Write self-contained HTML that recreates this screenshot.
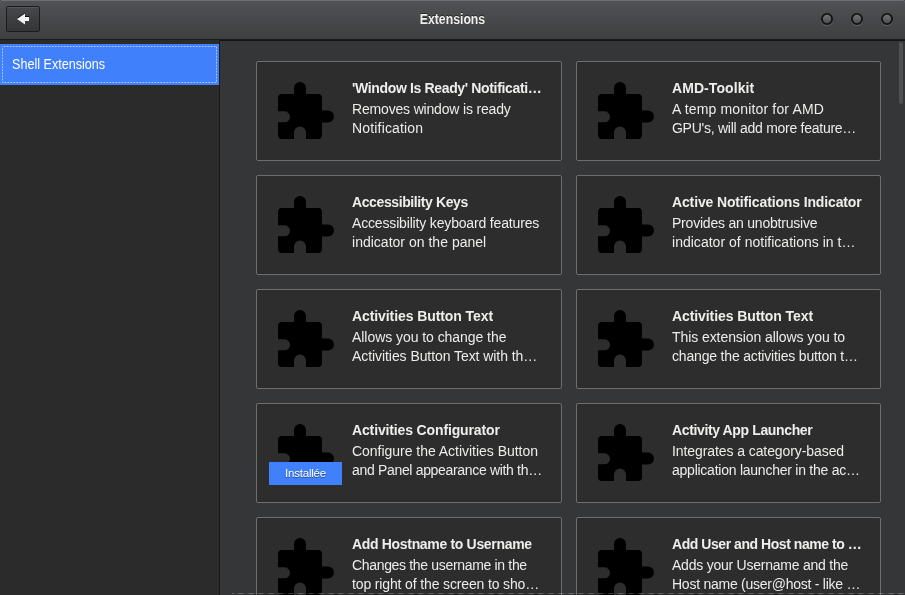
<!DOCTYPE html>
<html lang="en"><head><meta charset="utf-8"><title>Extensions</title>
<style>
html,body{margin:0;padding:0;}
body{width:905px;height:595px;overflow:hidden;position:relative;background:#353638;font-family:"Liberation Sans",sans-serif;font-size:14px;color:#eeeeec;}
#wrap{position:absolute;left:0;top:0;width:905px;height:595px;will-change:transform;}
#hdr{position:absolute;left:0;top:0;width:905px;height:39px;background:linear-gradient(#515255,#3e3f41);border-bottom:1px solid #1b1b1c;box-shadow:inset 0 1px 0 #6e6f71;border-radius:2px 2px 0 0;}
#hdrbg{position:absolute;left:0;top:0;width:905px;height:8px;background:#2a2a2a;}
#shadow{position:absolute;left:219px;top:40px;width:686px;height:1px;background:#131416;}
#title{position:absolute;left:0;width:905px;top:11px;text-align:center;font-weight:bold;font-size:14px;line-height:16px;color:#eeeeec;transform:scaleX(.875);text-shadow:0 -1px rgba(0,0,0,.5);}
#back{position:absolute;left:6px;top:6px;width:32px;height:24px;border:1px solid #1c1c1d;border-radius:2px;background:linear-gradient(#47484b,#343537);box-shadow:inset 0 1px 0 rgba(255,255,255,.09);}
#back svg{position:absolute;left:10px;top:5px;}
#wcs{position:absolute;left:815px;top:10px;}
#side{position:absolute;left:0;top:40px;width:219px;height:555px;background:#2b2b2b;border-right:1px solid #191919;}
#row{position:absolute;left:0;top:4px;width:219px;height:41px;background:#4080fb;}
#row .f{position:absolute;left:0;top:0;}
#row span{position:absolute;left:12px;top:12px;line-height:16px;font-size:14px;color:#fff;display:inline-block;white-space:nowrap;transform-origin:0 0;transform:scaleX(.9);}
.card{position:absolute;height:100px;box-sizing:border-box;border:1px solid #6e6e6e;border-radius:2px;background:#2d2d2d;}
.pz{position:absolute;left:21px;top:20px;}
.t{position:absolute;left:95px;top:18px;font-weight:bold;font-size:14px;line-height:16px;white-space:nowrap;color:#eeeeec;}
.d{position:absolute;left:95px;font-size:14px;line-height:16px;white-space:nowrap;color:#ececea;}
.d1{top:39px;}
.d2{top:58px;}
.badge{position:absolute;left:12px;top:58px;width:73px;height:23px;background:#4080fb;text-align:center;}
.badge span{font-size:11.5px;line-height:23px;display:block;color:#fff;text-shadow:0 1px rgba(0,0,0,.4);letter-spacing:-0.23px;}
#sb{position:absolute;left:899px;top:42px;width:4px;height:62px;border-radius:2px;background:#4f5053;}
#dash{position:absolute;left:232px;top:593px;}
</style></head><body>
<div id="wrap"><div id="hdrbg"></div>
<div id="hdr"></div>
<div id="title">Extensions</div>
<div id="back"><svg width="13" height="14" viewBox="0 0 13 14"><path d="M0,7 L8,1.5 L8,5 L12,5 L12,9 L8,9 L8,12.5 Z" fill="rgba(0,0,0,.75)" transform="translate(0,-1)"/><path d="M0,7 L8,1.5 L8,5 L12,5 L12,9 L8,9 L8,12.5 Z" fill="#f3f3f3"/></svg></div>
<svg id="wcs" width="90" height="20" viewBox="0 0 90 20"><defs><linearGradient id="wg" x1="0" y1="0" x2="0" y2="1"><stop offset="0" stop-color="#77787a"/><stop offset="1" stop-color="#48494b"/></linearGradient></defs>
<g fill="none" stroke="rgba(255,255,255,.13)" stroke-width="1.6"><circle cx="12" cy="10.2" r="5.2"/><circle cx="42" cy="10.2" r="5.2"/><circle cx="72" cy="10.2" r="5.2"/></g>
<g fill="url(#wg)" stroke="#141415" stroke-width="1.9"><circle cx="12" cy="9" r="5.1"/><circle cx="42" cy="9" r="5.1"/><circle cx="72" cy="9" r="5.1"/></g></svg>
<div id="side"><div id="row"><svg class="f" width="219" height="41" viewBox="0 0 219 41"><rect x="2.5" y="2.5" width="214" height="36" fill="none" stroke="rgba(255,255,255,.6)" stroke-width="1" stroke-dasharray="1.7 1.3" stroke-dashoffset="-1.3"/></svg><span>Shell Extensions</span></div></div>
<div id="shadow"></div>
<div class="card" style="left:256px;top:61px;width:306px"><svg class="pz" width="56" height="57" viewBox="0 0 56 57"><path d="M4,12 H16 V6 a6,6 0 0 1 12,0 V12 H40 a4,4 0 0 1 4,4 V28.5 H50 a6,6 0 0 1 0,12 H44 V53 a4,4 0 0 1 -4,4 H28 V50.5 a6,6 0 0 0 -12,0 V57 H4 a4,4 0 0 1 -4,-4 V40.3 H6.5 a5.5,5.5 0 0 0 0,-11 H0 V16 a4,4 0 0 1 4,-4 Z" fill="#000"/></svg><div class="t" id="t0" style="letter-spacing:-0.346px">'Window Is Ready' Notificati…</div><div class="d d1" id="a0" style="letter-spacing:-0.174px">Removes window is ready</div><div class="d d2" id="b0" style="letter-spacing:0.168px">Notification</div></div>
<div class="card" style="left:576px;top:61px;width:305px"><svg class="pz" width="56" height="57" viewBox="0 0 56 57"><path d="M4,12 H16 V6 a6,6 0 0 1 12,0 V12 H40 a4,4 0 0 1 4,4 V28.5 H50 a6,6 0 0 1 0,12 H44 V53 a4,4 0 0 1 -4,4 H28 V50.5 a6,6 0 0 0 -12,0 V57 H4 a4,4 0 0 1 -4,-4 V40.3 H6.5 a5.5,5.5 0 0 0 0,-11 H0 V16 a4,4 0 0 1 4,-4 Z" fill="#000"/></svg><div class="t" id="t1" style="letter-spacing:0.077px">AMD-Toolkit</div><div class="d d1" id="a1" style="letter-spacing:0.153px">A temp monitor for AMD</div><div class="d d2" id="b1" style="letter-spacing:-0.265px">GPU's, will add more feature…</div></div>
<div class="card" style="left:256px;top:175px;width:306px"><svg class="pz" width="56" height="57" viewBox="0 0 56 57"><path d="M4,12 H16 V6 a6,6 0 0 1 12,0 V12 H40 a4,4 0 0 1 4,4 V28.5 H50 a6,6 0 0 1 0,12 H44 V53 a4,4 0 0 1 -4,4 H28 V50.5 a6,6 0 0 0 -12,0 V57 H4 a4,4 0 0 1 -4,-4 V40.3 H6.5 a5.5,5.5 0 0 0 0,-11 H0 V16 a4,4 0 0 1 4,-4 Z" fill="#000"/></svg><div class="t" id="t2" style="letter-spacing:-0.398px">Accessibility Keys</div><div class="d d1" id="a2" style="letter-spacing:-0.164px">Accessibility keyboard features</div><div class="d d2" id="b2" style="letter-spacing:0.015px">indicator on the panel</div></div>
<div class="card" style="left:576px;top:175px;width:305px"><svg class="pz" width="56" height="57" viewBox="0 0 56 57"><path d="M4,12 H16 V6 a6,6 0 0 1 12,0 V12 H40 a4,4 0 0 1 4,4 V28.5 H50 a6,6 0 0 1 0,12 H44 V53 a4,4 0 0 1 -4,4 H28 V50.5 a6,6 0 0 0 -12,0 V57 H4 a4,4 0 0 1 -4,-4 V40.3 H6.5 a5.5,5.5 0 0 0 0,-11 H0 V16 a4,4 0 0 1 4,-4 Z" fill="#000"/></svg><div class="t" id="t3" style="letter-spacing:-0.139px">Active Notifications Indicator</div><div class="d d1" id="a3" style="letter-spacing:-0.213px">Provides an unobtrusive</div><div class="d d2" id="b3" style="letter-spacing:0.020px">indicator of notifications in t…</div></div>
<div class="card" style="left:256px;top:289px;width:306px"><svg class="pz" width="56" height="57" viewBox="0 0 56 57"><path d="M4,12 H16 V6 a6,6 0 0 1 12,0 V12 H40 a4,4 0 0 1 4,4 V28.5 H50 a6,6 0 0 1 0,12 H44 V53 a4,4 0 0 1 -4,4 H28 V50.5 a6,6 0 0 0 -12,0 V57 H4 a4,4 0 0 1 -4,-4 V40.3 H6.5 a5.5,5.5 0 0 0 0,-11 H0 V16 a4,4 0 0 1 4,-4 Z" fill="#000"/></svg><div class="t" id="t4" style="letter-spacing:-0.087px">Activities Button Text</div><div class="d d1" id="a4" style="letter-spacing:-0.053px">Allows you to change the</div><div class="d d2" id="b4" style="letter-spacing:-0.068px">Activities Button Text with th…</div></div>
<div class="card" style="left:576px;top:289px;width:305px"><svg class="pz" width="56" height="57" viewBox="0 0 56 57"><path d="M4,12 H16 V6 a6,6 0 0 1 12,0 V12 H40 a4,4 0 0 1 4,4 V28.5 H50 a6,6 0 0 1 0,12 H44 V53 a4,4 0 0 1 -4,4 H28 V50.5 a6,6 0 0 0 -12,0 V57 H4 a4,4 0 0 1 -4,-4 V40.3 H6.5 a5.5,5.5 0 0 0 0,-11 H0 V16 a4,4 0 0 1 4,-4 Z" fill="#000"/></svg><div class="t" id="t5" style="letter-spacing:-0.087px">Activities Button Text</div><div class="d d1" id="a5" style="letter-spacing:-0.073px">This extension allows you to</div><div class="d d2" id="b5" style="letter-spacing:-0.179px">change the activities button t…</div></div>
<div class="card" style="left:256px;top:403px;width:306px"><svg class="pz" width="56" height="57" viewBox="0 0 56 57"><path d="M4,12 H16 V6 a6,6 0 0 1 12,0 V12 H40 a4,4 0 0 1 4,4 V28.5 H50 a6,6 0 0 1 0,12 H44 V53 a4,4 0 0 1 -4,4 H28 V50.5 a6,6 0 0 0 -12,0 V57 H4 a4,4 0 0 1 -4,-4 V40.3 H6.5 a5.5,5.5 0 0 0 0,-11 H0 V16 a4,4 0 0 1 4,-4 Z" fill="#000"/></svg><div class="badge"><span>Installée</span></div><div class="t" id="t6" style="letter-spacing:-0.138px">Activities Configurator</div><div class="d d1" id="a6" style="letter-spacing:-0.026px">Configure the Activities Button</div><div class="d d2" id="b6" style="letter-spacing:-0.325px">and Panel appearance with th…</div></div>
<div class="card" style="left:576px;top:403px;width:305px"><svg class="pz" width="56" height="57" viewBox="0 0 56 57"><path d="M4,12 H16 V6 a6,6 0 0 1 12,0 V12 H40 a4,4 0 0 1 4,4 V28.5 H50 a6,6 0 0 1 0,12 H44 V53 a4,4 0 0 1 -4,4 H28 V50.5 a6,6 0 0 0 -12,0 V57 H4 a4,4 0 0 1 -4,-4 V40.3 H6.5 a5.5,5.5 0 0 0 0,-11 H0 V16 a4,4 0 0 1 4,-4 Z" fill="#000"/></svg><div class="t" id="t7" style="letter-spacing:-0.369px">Activity App Launcher</div><div class="d d1" id="a7" style="letter-spacing:-0.085px">Integrates a category-based</div><div class="d d2" id="b7" style="letter-spacing:-0.244px">application launcher in the ac…</div></div>
<div class="card" style="left:256px;top:517px;width:306px"><svg class="pz" width="56" height="57" viewBox="0 0 56 57"><path d="M4,12 H16 V6 a6,6 0 0 1 12,0 V12 H40 a4,4 0 0 1 4,4 V28.5 H50 a6,6 0 0 1 0,12 H44 V53 a4,4 0 0 1 -4,4 H28 V50.5 a6,6 0 0 0 -12,0 V57 H4 a4,4 0 0 1 -4,-4 V40.3 H6.5 a5.5,5.5 0 0 0 0,-11 H0 V16 a4,4 0 0 1 4,-4 Z" fill="#000"/></svg><div class="t" id="t8" style="letter-spacing:-0.323px">Add Hostname to Username</div><div class="d d1" id="a8" style="letter-spacing:-0.328px">Changes the username in the</div><div class="d d2" id="b8" style="letter-spacing:-0.139px">top right of the screen to sho…</div></div>
<div class="card" style="left:576px;top:517px;width:305px"><svg class="pz" width="56" height="57" viewBox="0 0 56 57"><path d="M4,12 H16 V6 a6,6 0 0 1 12,0 V12 H40 a4,4 0 0 1 4,4 V28.5 H50 a6,6 0 0 1 0,12 H44 V53 a4,4 0 0 1 -4,4 H28 V50.5 a6,6 0 0 0 -12,0 V57 H4 a4,4 0 0 1 -4,-4 V40.3 H6.5 a5.5,5.5 0 0 0 0,-11 H0 V16 a4,4 0 0 1 4,-4 Z" fill="#000"/></svg><div class="t" id="t9" style="letter-spacing:-0.448px">Add User and Host name to …</div><div class="d d1" id="a9" style="letter-spacing:-0.232px">Adds your Username and the</div><div class="d d2" id="b9" style="letter-spacing:-0.249px">Host name (user@host - like …</div></div>
<div id="sb"></div>
<svg id="dash" width="673" height="2" viewBox="0 0 673 2"><line x1="0" y1="0.5" x2="673" y2="0.5" stroke="rgba(255,255,255,.05)"/><line x1="0" y1="0.5" x2="673" y2="0.5" stroke="rgba(255,255,255,.2)" stroke-dasharray="5 5" stroke-dashoffset="-6.5"/></svg></div>
</body></html>
